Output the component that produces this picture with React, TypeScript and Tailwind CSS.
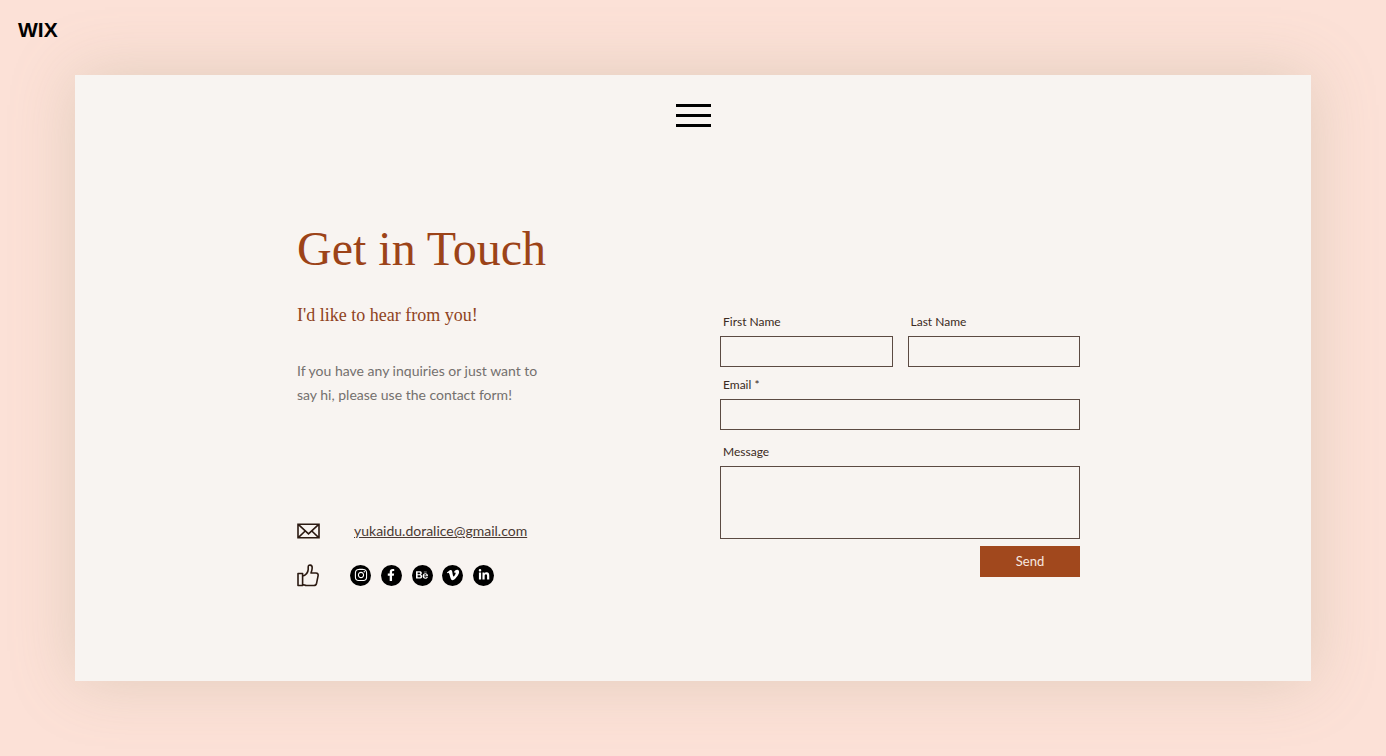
import type { ReactNode } from "react";
import { FaBehance, FaFacebookF, FaInstagram, FaLinkedinIn, FaVimeoV } from "react-icons/fa";

const socials = [
  { name: "Instagram", icon: <FaInstagram className="size-3.5" /> },
  { name: "Facebook", icon: <FaFacebookF className="size-3" /> },
  { name: "Behance", icon: <FaBehance className="size-3" /> },
  { name: "Vimeo", icon: <FaVimeoV className="size-3.5" /> },
  { name: "LinkedIn", icon: <FaLinkedinIn className="size-3" /> },
];

const fieldClass =
  "block w-full resize-none border border-[#5b4a42] bg-transparent px-2 text-sm text-[#2b1a12] outline-none focus:border-[#a1481d]";

function Field({ id, label, children }: { id: string; label: string; children: ReactNode }) {
  return (
    <div>
      <label htmlFor={id} className="mb-1 block px-[3px] text-xs leading-5 text-[#3b2a22]">
        {label}
      </label>
      {children}
    </div>
  );
}

function EnvelopeIcon() {
  return (
    <svg viewBox="0 0 23 16" className="h-4 w-[23px]" fill="none" stroke="#2b1a12" strokeWidth="1.6" aria-hidden="true">
      <path d="M1 1.2h21v13.6H1zM1 1.2l10.5 9.6L22 1.2M1 14.8l7.2-6.8M22 14.8l-7.2-6.8" />
    </svg>
  );
}

function ThumbIcon() {
  return (
    <svg
      viewBox="0 0 22 23"
      className="h-[23px] w-[22px]"
      fill="none"
      stroke="#2b1a12"
      strokeWidth="1.6"
      strokeLinejoin="round"
      aria-hidden="true"
    >
      <path d="M1 9.5h4.6v12H1zM5.600 12.200c3.200-1 5.400-3.800 5.600-6.800V3c0-2.800 4-2.400 4 .8 0 2-.6 3.700-1.200 5.200h4.800c2.200 0 2.600 1.600 2.200 3.200l-1.400 7c-.4 1.700-1.200 2.300-2.800 2.300H9.500c-1.600 0-2.400-1-3.900-1" />
    </svg>
  );
}

export default function App() {
  return (
    <div className="flex min-h-screen flex-col bg-[#fce1d7] px-5 pb-[75px] font-['Lato',sans-serif] sm:px-[75px]">
      <header className="-mx-5 flex h-[75px] items-start px-[18px] pt-[18px] sm:-mx-[75px]">
        <a href="#" className="font-['Liberation_Sans',sans-serif] text-[21px] leading-6 font-bold text-black">
          WIX
        </a>
      </header>

      <main className="flex flex-1 flex-col bg-[#f8f4f1] px-6 pb-20 shadow-[0_0_60px_rgba(155,150,120,0.28)]">
        <button type="button" aria-label="Open menu" className="mx-auto mt-[29px] flex w-[35px] flex-col gap-[7px]">
          <span className="h-[3px] w-full bg-black" />
          <span className="h-[3px] w-full bg-black" />
          <span className="h-[3px] w-full bg-black" />
        </button>

        <div className="mx-auto mt-[92px] grid w-full max-w-[792px] gap-12 pr-[9px] md:grid-cols-[1fr_360px]">
          <section>
            <h1 className="font-['Liberation_Serif',serif] text-5xl leading-[60px] text-[#9c4318]">Get in Touch</h1>
            <h2 className="mt-6 font-['Liberation_Serif',serif] text-lg leading-6 text-[#8f4322]">
              I'd like to hear from you!
            </h2>
            <p className="mt-8 max-w-[260px] text-sm leading-6 text-[#74706e]">
              If you have any inquiries or just want to say hi, please use the contact form!
            </p>

            <div className="mt-28 flex h-6 items-center">
              <div className="w-[57px]">
                <EnvelopeIcon />
              </div>
              <a href="mailto:yukaidu.doralice@gmail.com" className="text-sm text-[#4a3a33] underline">
                yukaidu.doralice@gmail.com
              </a>
            </div>
            <div className="mt-5 flex h-6 items-center">
              <div className="w-[53px]">
                <ThumbIcon />
              </div>
              <ul className="flex w-36 justify-between">
                {socials.map((s) => (
                  <li key={s.name}>
                    <a
                      href="#"
                      aria-label={s.name}
                      className="flex size-[21px] items-center justify-center rounded-full bg-black text-white"
                    >
                      {s.icon}
                    </a>
                  </li>
                ))}
              </ul>
            </div>
          </section>

          <form className="md:pt-[93px]" onSubmit={(e) => e.preventDefault()}>
            <div className="grid grid-cols-2 gap-[15px]">
              <Field id="first-name" label="First Name">
                <input id="first-name" type="text" className={`${fieldClass} h-[31px]`} />
              </Field>
              <Field id="last-name" label="Last Name">
                <input id="last-name" type="text" className={`${fieldClass} h-[31px]`} />
              </Field>
            </div>
            <div className="mt-2">
              <Field id="email" label="Email *">
                <input id="email" type="email" required className={`${fieldClass} h-[31px]`} />
              </Field>
            </div>
            <div className="mt-3">
              <Field id="message" label="Message">
                <textarea id="message" className={`${fieldClass} h-[73px]`} />
              </Field>
            </div>
            <button
              type="submit"
              className="mt-[7px] ml-auto block h-[31px] w-[100px] bg-[#a1481d] text-[13px] text-[#f8e9e0]"
            >
              Send
            </button>
          </form>
        </div>
      </main>
    </div>
  );
}
